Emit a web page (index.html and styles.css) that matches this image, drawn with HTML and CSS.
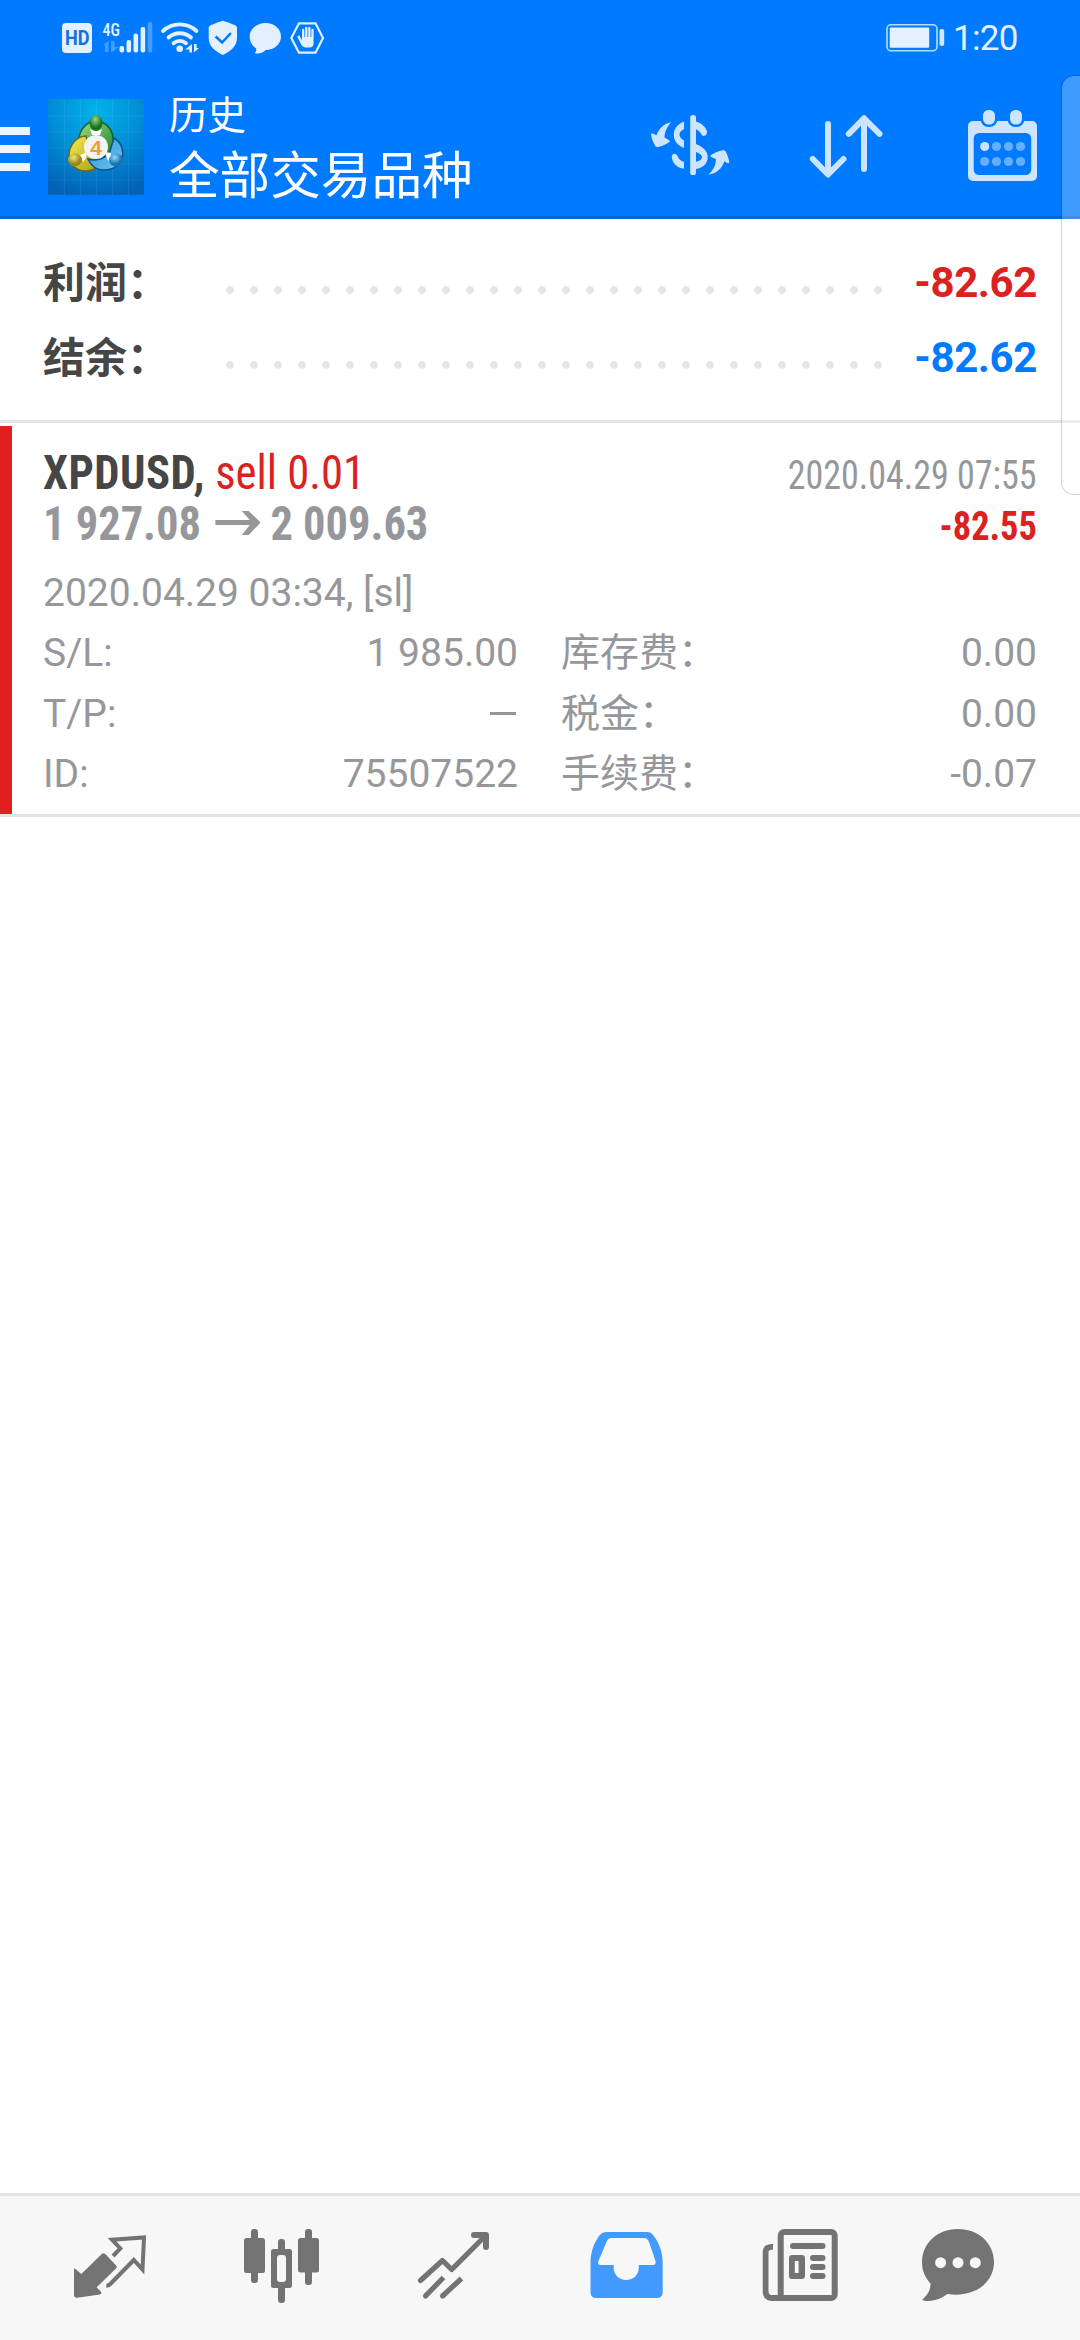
FILE: index.html
```html
<!DOCTYPE html>
<html lang="zh-CN">
<head>
<meta charset="utf-8">
<title>历史</title>
<link rel="stylesheet" href="styles.css">
</head>
<body>
<div class="screen">
  <header class="header">
    <div class="statusbar">
      <svg class="status-icons" viewBox="60 16 268 44" fill="#e3f0ff">
        <rect x="62" y="23" width="30" height="30" rx="4"/>
        <text x="65" y="45.2" class="hd" textLength="24.5" lengthAdjust="spacingAndGlyphs">HD</text>
        <text x="102.5" y="35.8" class="net" textLength="17.5" lengthAdjust="spacingAndGlyphs">4G</text>
        <path opacity=".3" d="M103 45l5.500-4v11h-3.500v-7zM111 41h3.500v6h4.500l-8 5.500z"/>
        <rect x="119.500" y="46" width="4.600" height="6.500" rx="2"/>
        <rect x="126.500" y="40" width="4.600" height="12.500" rx="2"/>
        <rect x="133.500" y="33.500" width="4.600" height="19" rx="2"/>
        <rect x="140.600" y="27" width="4.600" height="25.500" rx="2"/>
        <rect x="147.700" y="22" width="4.600" height="30.500" rx="2" opacity=".3"/>
        <g fill="none" stroke="#e3f0ff" stroke-width="3.800" stroke-linecap="round">
          <path d="M163 31a24.500 24.500 0 0 1 33.500 0M168.500 37.500a17 17 0 0 1 22.500 0M173.500 43.200a10 10 0 0 1 12.500 0"/>
        </g>
        <circle cx="179.700" cy="48.800" r="3.300"/>
        <path d="M185 49.500l7-5.500v8.500h-2.600v-3zM194 44h2.600v4h2.400l-5 4.500z"/>
        <path d="M222.800 20.700c1 0 11.500 4 12.700 4.700s1.500 1.500 1.500 3v9.600c0 8-6 13-14.200 17-8.200-4-14.100-9-14.100-17v-9.600c0-1.500.3-2.300 1.500-3s11.600-4.700 12.600-4.700z"/>
        <path d="M215.600 36.500l6.500 6 8.800-9.500" fill="none" stroke="#007aff" stroke-width="2.500"/>
        <path d="M265.500 23c9 0 15.500 6 15.500 13.500s-6.500 13.500-15.500 13.500c-2 3-6.500 4-10.800 3.200 1.500-1.500 1.800-3 1.300-5-4-2.500-6.300-6.700-6.300-11.700 0-7.500 7-13.500 15.800-13.500z"/>
        <path d="M299 23.300h16.500l7.500 14.700-7.500 14.700h-16.500l-7.700-14.700z" fill="none" stroke="#e3f0ff" stroke-width="2.200"/>
        <path d="M302 40.500v-10.500a1 1 0 0 1 2.300 0v7h.8v-9a1.100 1.100 0 0 1 2.300 0v9h.8v-9a1.100 1.100 0 0 1 2.300 0v9h.8v-7a1 1 0 0 1 2.300 0v13c0 3-1.500 4.500-4 4.500h-3.600c-2.500 0-4-1.500-5-3.500l-3.500-7c-.3-1 1.400-2 2.200-1z"/>
      </svg>
      <div class="status-right">
        <svg class="battery" viewBox="885 22 60 32">
          <rect x="887" y="24.800" width="50" height="26" rx="4" fill="none" stroke="#b8dbff" stroke-width="1.600"/>
          <rect x="889.700" y="27.500" width="39.500" height="20.200" rx="1" fill="#e3f0ff"/>
          <rect x="939.500" y="29" width="4.700" height="17" rx="2" fill="#cfe6ff"/>
        </svg>
        <span class="clock">1:20</span>
      </div>
    </div>
    <div class="appbar">
      <div class="menu"><i></i><i></i><i></i></div>
      <svg class="logo" viewBox="0 0 96 96">
        <defs>
          <radialGradient id="bg" cx=".5" cy=".12" r=".9"><stop offset="0" stop-color="#02b2ea"/><stop offset=".5" stop-color="#028ed6"/><stop offset="1" stop-color="#0262b6"/></radialGradient>
          <linearGradient id="gr" x2="1" y2="1"><stop offset="0" stop-color="#a5dc83"/><stop offset="1" stop-color="#16822f"/></linearGradient>
          <linearGradient id="ye" x2="1" y2="1"><stop offset="0" stop-color="#f8ee50"/><stop offset="1" stop-color="#aa9d12"/></linearGradient>
          <linearGradient id="bl" x2="1" y2="1"><stop offset="0" stop-color="#2c94d8"/><stop offset="1" stop-color="#6cc4ee"/></linearGradient>
          <radialGradient id="hg" cx=".45" cy=".28"><stop offset="0" stop-color="#9bd785"/><stop offset="1" stop-color="#16761f"/></radialGradient>
          <radialGradient id="hy" cx=".4" cy=".3"><stop offset="0" stop-color="#f4e97c"/><stop offset="1" stop-color="#968916"/></radialGradient>
          <radialGradient id="hb" cx=".4" cy=".3"><stop offset="0" stop-color="#9dd9f4"/><stop offset="1" stop-color="#1674b9"/></radialGradient>
        </defs>
        <rect width="96" height="96" fill="url(#bg)"/>
        <path d="M0 17h96M0 33h96M0 49h96M0 65h96M0 81h96M16.500 0v96M32.500 0v96M48.500 0v96M64.500 0v96M80.500 0v96" stroke="#7fd4ff" stroke-opacity=".13"/>
        <path d="M31 47c-2-13 5-24 17-25 12 1 19 11 17 24-1 6-4 10-8 12z" fill="url(#gr)" stroke="#0b6331" stroke-width="1.500"/>
        <path d="M38 37c-9 0-17 9-17 20 0 9 8 15 17 15 6 0 10-2 13-6l-9-14z" fill="url(#ye)" stroke="#6d6a19" stroke-width="1.500"/>
        <path d="M66 39c8 5 10 13 8 20-3 8-10 12-18 12-8 0-13-4-16-11 6 2 14 1 21-5z" fill="url(#bl)" stroke="#0c528c" stroke-width="1.500"/>
        <path d="M42 30l6 2 6-2-2 6h-8zM32 56l7-3-1 6-3 4zM63 54l-6-1 2 7 4 4z" fill="#fff"/>
        <ellipse cx="48" cy="24" rx="6.500" ry="8" fill="url(#hg)"/>
        <ellipse cx="27" cy="61" rx="7" ry="6.500" fill="url(#hy)"/>
        <ellipse cx="68" cy="61" rx="7" ry="6.500" fill="url(#hb)"/>
        <circle cx="48" cy="48" r="12" fill="#f3f3f3"/>
        <text x="48" y="55.500" text-anchor="middle" class="four">4</text>
      </svg>
      <div class="titles">
        <div class="subtitle">历史</div>
        <div class="title">全部交易品种</div>
      </div>
      <div class="actions">
        <svg class="act-dollar" viewBox="650 108 80 74" fill="#cce4ff">
          <rect x="690.200" y="115" width="5.800" height="60" rx="2.600"/>
          <path d="M684 121.500c-7 3-10.200 7.500-10.200 13.200s3.200 10.500 10.200 13.300v-7.500c-3-1.800-4.500-3.500-4.500-5.800s1.500-4 4.500-5.700z"/>
          <path d="M684 168.800c-7-1-11.500-5.500-12.200-11.500-.2-4 4.200-4.600 5.700-1.400 1.200 3 3 5 6.500 5.800z"/>
          <path d="M696 121.500c5.500 1.500 10 5.500 11 10 .5 3.500-3.500 5.800-5.200 3.400-1.300-2.500-3.300-4.700-5.800-5.700zM696 144c7.500 3 11.700 7.500 11.700 13 0 6.500-4.700 11-11.700 12v-7.200c4-1 6-2.500 6-4.800 0-2-2.500-4-6-5z"/>
          <path d="M671.500 122.300c-8 1.200-12.500 6.500-15 13l-3.200-1.500c-1.500-.5-2.500 0-2.200 1.200.7 4 2.200 7.500 4 10.800.8 1.300 2 1.500 4 1 3.700-1 6.800-2.600 9.800-4.600 1.300-.9 1-1.700 0-2.300l-4.400-2.500c.3-5.500 2.500-11 7-15.100z"/>
          <path d="M708.400 174.800c8-1.300 13.500-6 16-13.500l3 1.700c1.300.6 2.300 0 1.800-1.500-.7-3.600-2-7-3.500-10-.8-1.300-2.200-1.500-4-1.100-4 .8-7.400 2.400-10.200 4.400-1.500 1-1.500 1.700-.2 2.300l4.700 2.200c0 5.500-2.800 11-7.600 15.500z"/>
        </svg>
        <svg class="act-sort" viewBox="806 110 80 74" fill="none" stroke="#cce4ff" stroke-width="6" stroke-linecap="round" stroke-linejoin="round">
          <path d="M828 124v50M812.800 159l15.200 15.500 15.500-15.500M864 169v-50M848.800 133.800l15.200-15.500 15.500 15.500"/>
        </svg>
        <svg class="act-cal" viewBox="966 108 74 76">
          <rect x="968" y="121" width="69" height="60" rx="5" fill="#cce4ff"/>
          <rect x="973.700" y="133" width="57.500" height="42" rx="5.500" fill="#007aff"/>
          <g fill="#cce4ff" stroke="#007aff" stroke-width="5" paint-order="stroke">
            <rect x="983" y="110" width="12" height="14.500" rx="5.500"/><rect x="1010" y="110" width="12" height="14.500" rx="5.500"/>
          </g>
          <g fill="#66afff"><circle cx="984.700" cy="146.500" r="4.600" fill="#cce4ff"/><circle cx="996.500" cy="146.500" r="4.600"/><circle cx="1008.500" cy="146.500" r="4.600"/><circle cx="1020.500" cy="146.500" r="4.600"/><circle cx="984.700" cy="161.500" r="4.600"/><circle cx="996.500" cy="161.500" r="4.600"/><circle cx="1008.500" cy="161.500" r="4.600"/><circle cx="1020.500" cy="161.500" r="4.600"/></g>
        </svg>
      </div>
    </div>
  </header>

  <section class="summary">
    <div class="sum-row"><span class="sum-label">利润：</span><span class="dots"></span><span class="sum-value red">-82.62</span></div>
    <div class="sum-row"><span class="sum-label">结余：</span><span class="dots"></span><span class="sum-value blue">-82.62</span></div>
  </section>

  <article class="deal">
    <div class="deal-line">
      <div class="symbol"><b>XPDUSD,</b> <span class="red">sell 0.01</span></div>
      <div class="close-time">2020.04.29 07:55</div>
    </div>
    <div class="deal-line">
      <div class="prices"><span>1 927.08</span><svg class="arrow" viewBox="0 0 46 26" preserveAspectRatio="none"><path d="M0 10h35L27 1h7l12 11.500L34 25h-7l8-10H0z" fill="#96979b"/></svg><span>2 009.63</span></div>
      <div class="profit">-82.55</div>
    </div>
    <div class="comment">2020.04.29 03:34, [sl]</div>
    <div class="details">
      <span>S/L:</span><span class="num">1 985.00</span><span class="cn">库存费：</span><span class="num">0.00</span>
      <span>T/P:</span><span class="num"><i class="dash"></i></span><span class="cn">税金：</span><span class="num">0.00</span>
      <span>ID:</span><span class="num">75507522</span><span class="cn">手续费：</span><span class="num">-0.07</span>
    </div>
  </article>
  <div class="divider"></div>

  <nav class="tabs">
    <svg viewBox="70 2222 80 84" fill="#737373">
      <path d="M74 2269.500q.2-1.500 1.500-.5l5.800 5 20.500-20q1.700-1.500 3.400 0l11 11.500q1 1.500 0 2.700l-19.500 19 4.300 4.500q1.200 2-1 2.700l-23 3.300q-3 .2-3-3z"/>
      <path d="M113 2256l7.300-7.500-8.300-8.800 32-2.200-1.500 32-8.700-9.500-24 24.500q-1.300 1.300-3.500 1" fill="none" stroke="#737373" stroke-width="4"/>
    </svg>
    <svg viewBox="242 2222 80 84" fill="#737373">
      <rect x="244" y="2238" width="21" height="35" rx="2.500"/><rect x="251" y="2229" width="7" height="54" rx="3"/>
      <rect x="271" y="2249" width="21" height="39" rx="2.500"/><rect x="278" y="2239" width="7" height="64" rx="3"/>
      <rect x="277" y="2255" width="9" height="27" rx="3" fill="#f7f7f7"/>
      <rect x="298" y="2238" width="21" height="34.500" rx="2.500"/><rect x="305" y="2229" width="7" height="56" rx="3"/>
    </svg>
    <svg viewBox="414 2222 80 84" fill="none" stroke="#737373" stroke-width="5.200">
      <path stroke-linecap="round" stroke-linejoin="round" d="M420.500 2280.500l22-20 9.200 9 34-34"/>
      <path stroke-linecap="round" stroke-linejoin="round" stroke-width="6" d="M474 2235h12v12"/>
      <path d="M425.500 2296l18-18.500M442.500 2296l19-17.500"/><path stroke-linecap="round" d="M425.500 2296l.1-.1M442.500 2296l.1-.1"/>
    </svg>
    <svg class="tab-active" viewBox="587 2222 80 84">
      <path fill="#429aff" fill-rule="evenodd" d="M607 2232h40q4 0 6 3c6.500 8 9.700 18 9.700 28v29q0 6-6 6h-60.200q-6 0-6-6v-29c0-11 3.500-20 8.500-27q3-4 8-4zM611.500 2238q-3.500 0-5 4l-8 19q-1.500 4 1.500 4h13.700v3c0 7 5.500 12 12.500 12s12.500-5 12.500-12v-3h14.500q3 0 2.300-4l-6.500-19q-1.500-4-5-4z"/>
    </svg>
    <svg viewBox="760 2222 80 84" fill="#737373">
      <rect x="780.700" y="2232" width="54" height="66" rx="3.500" fill="none" stroke="#737373" stroke-width="6"/>
      <path d="M773 2247q-7.400-.5-7.400 5v39q0 7 6 7h13" fill="none" stroke="#737373" stroke-width="5.800"/>
      <rect x="790" y="2243" width="35.500" height="6" rx="3"/><rect x="810" y="2255" width="15.500" height="6" rx="3"/><rect x="810" y="2264" width="15.500" height="6" rx="3"/><rect x="810" y="2273" width="15.500" height="6" rx="3"/>
      <path fill-rule="evenodd" d="M792 2255h10q3 0 3 3v18q0 3-3 3h-10q-3 0-3-3v-18q0-3 3-3zM794.800 2261v12h3.800v-12z"/>
    </svg>
    <svg class="tab-last" viewBox="918 2222 80 84" fill="#737373">
      <path d="M958 2229c21 0 36 14.500 36 33 0 21-20 36-46.500 32-6 4.500-13 7-21 7-4 0-5-1-3-2.500 5-4.500 7-9 7-15-5.500-6-8.500-13-8.500-21 0-19 15-33.500 36-33.500z"/>
      <g fill="#f7f7f7"><circle cx="940.600" cy="2262.700" r="5.500"/><circle cx="958" cy="2262.700" r="5.500"/><circle cx="975.300" cy="2262.700" r="5.500"/></g>
    </svg>
  </nav>
  <div class="edge-panel"></div>
</div>
</body>
</html>
```

FILE: styles.css
```css
* { box-sizing: border-box; }
body { margin: 0; font-family: Roboto, "Noto Sans CJK SC", sans-serif; }
svg { display: block; flex: none; }
.screen { position: relative; width: 1080px; height: 2340px; background: #fff; display: flex; flex-direction: column; overflow: hidden; }

.header { height: 219px; background: #007aff; border-bottom: 3px solid #0568d0; }
.statusbar { height: 75px; padding: 16px 62px 0 60px; display: flex; justify-content: space-between; align-items: flex-start; }
.status-icons { width: 268px; height: 44px; }
.hd { font: 700 20px Roboto, sans-serif; fill: #1470dc; }
.net { font: 500 19px "Roboto Condensed", Roboto, sans-serif; }
.status-right { display: flex; gap: 8px; padding-top: 6px; }
.battery { width: 60px; height: 32px; }
.clock { width: 65px; font-size: 35px; line-height: 34px; letter-spacing: -.7px; color: #e3f0ff; white-space: nowrap; }

.appbar { height: 141px; display: flex; align-items: flex-start; padding-right: 40px; }
.menu { width: 30px; margin-top: 52px; display: flex; flex-direction: column; gap: 10px; }
.menu i { height: 8px; background: #ebf5ff; }
.logo { width: 96px; height: 96px; margin: 24px 0 0 18px; }
.four { font: 700 21px "Liberation Sans", sans-serif; fill: #f39a35; }
.titles { margin-left: 25px; padding-top: 7px; color: #fff; white-space: nowrap; font-family: "Noto Sans CJK SC", sans-serif; }
.subtitle { font-size: 38.500px; line-height: 60px; }
.title { font-size: 50.600px; line-height: 61px; font-weight: 400; }
.actions { margin-left: auto; display: flex; padding-top: 33px; }
.act-dollar { width: 80px; height: 74px; margin-right: 76px; }
.act-sort { width: 80px; height: 74px; margin: 2px 80px 0 0; }
.act-cal { width: 74px; height: 76px; }

.summary { height: 204px; padding: 26px 43px 0; border-bottom: 3px solid #e4e4e4; }
.sum-row { height: 75px; display: flex; line-height: 75px; font-size: 42px; font-weight: 700; }
.sum-label { width: 175px; height: 61px; margin-top: 8px; line-height: 61px; color: #464646; white-space: nowrap; }
.dots { width: 672px; height: 24px; margin-top: 33px; background: radial-gradient(circle at 12px 12px, #e5e5e5 3.400px, transparent 4.200px) 0 0 / 24px 24px; }
.sum-value { margin-left: auto; letter-spacing: -.4px; }
.red { color: #dc2121; }
.blue { color: #007aff; }

.deal { height: 388px; margin-top: 3px; padding: 21px 43px 0 31px; border-left: 12px solid #e21f1f; color: #96979b; }
.deal-line { height: 51px; display: flex; justify-content: space-between; align-items: baseline; line-height: 51px; font-family: "Roboto Condensed", Roboto, sans-serif; white-space: nowrap; }
.symbol { font-size: 48px; transform: scaleX(.93); transform-origin: 0 50%; }
.symbol b { color: #464646; letter-spacing: .5px; }
.close-time { font-size: 40px; transform: scaleX(.9); transform-origin: 100% 50%; }
.prices { font-size: 48px; font-weight: 700; display: flex; align-items: baseline; transform: scaleX(.926); transform-origin: 0 50%; }
.arrow { width: 49px; height: 26px; margin: 12px 11px 0 15px; align-self: flex-start; }
.profit { font-size: 40px; font-weight: 700; color: #dc2121; transform: scaleX(.91); transform-origin: 100% 50%; }
.comment { margin-top: 14px; height: 60px; font-size: 39px; line-height: 60px; }
.details { display: grid; grid-template-columns: 99px 376px 200px 1fr; grid-template-rows: 61px 60px 61px; font-size: 39px; line-height: 61px; }
.cn { padding-left: 43px; white-space: nowrap; }
.num { text-align: right; }
.dash { display: inline-block; width: 26px; height: 3px; margin-right: 2px; background: #96979b; vertical-align: 12px; }
.divider { height: 3px; background: #e4e4e4; }

.tabs { margin-top: auto; height: 147px; background: #f7f7f7; border-top: 3px solid #e4e4e4; display: flex; gap: 92px; padding: 26px 0 0 70px; }
.tabs svg { width: 80px; height: 84px; }
.tabs .tab-active { margin: 0 1px; }
.tabs .tab-last { margin-left: -14px; }

.edge-panel { position: absolute; left: 1061px; top: 75px; width: 32px; height: 420px; border: 1.500px solid rgba(0, 0, 0, .17); border-radius: 13px; background: rgba(255, 255, 255, .25); background-clip: padding-box; }
```
